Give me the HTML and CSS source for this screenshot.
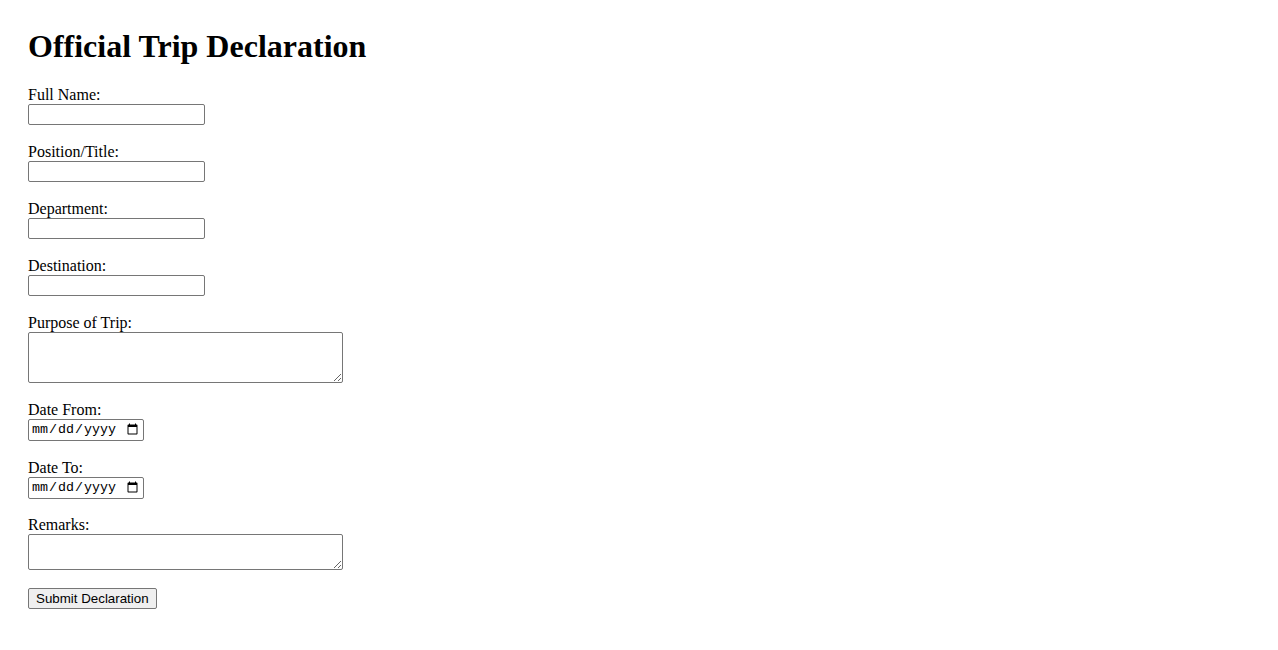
FILE: index.html
```html
<!DOCTYPE html>
<html lang="en">
<head>
<meta charset="utf-8">
<title>Official Trip Declaration</title>
<link rel="stylesheet" href="styles.css">
</head>
<body>
<h1 class="title">Official Trip Declaration</h1>
<form class="form">
  <div class="field">
    <label class="label" for="name">Full Name:</label>
    <input class="text" type="text" id="name">
  </div>
  <div class="field">
    <label class="label" for="pos">Position/Title:</label>
    <input class="text" type="text" id="pos">
  </div>
  <div class="field">
    <label class="label" for="dept">Department:</label>
    <input class="text" type="text" id="dept">
  </div>
  <div class="field">
    <label class="label" for="dest">Destination:</label>
    <input class="text" type="text" id="dest">
  </div>
  <div class="field">
    <label class="label" for="purpose">Purpose of Trip:</label>
    <textarea class="area area-3" id="purpose" rows="3"></textarea>
  </div>
  <div class="field">
    <label class="label" for="from">Date From:</label>
    <input class="date" type="date" id="from">
  </div>
  <div class="field field-date">
    <label class="label" for="to">Date To:</label>
    <input class="date" type="date" id="to">
  </div>
  <div class="field">
    <label class="label" for="remarks">Remarks:</label>
    <textarea class="area area-2" id="remarks" rows="2"></textarea>
  </div>
  <div class="field">
    <button class="submit" type="submit">Submit Declaration</button>
  </div>
</form>
</body>
</html>
```

FILE: styles.css
```css
body {
  margin: 0;
  padding: 28px;
  font-family: "Liberation Serif", "Times New Roman", serif;
  font-size: 16px;
  color: #000;
  background: #fff;
}
.title {
  font-size: 32px;
  font-weight: bold;
  margin: 0 0 21px;
}
.field {
  margin-bottom: 18px;
}
.label {
  display: block;
}
.text {
  width: 177px;
  height: 21px;
  box-sizing: border-box;
  font-family: "Liberation Sans", Arial, sans-serif;
  font-size: 13.33px;
  border: 1px solid #767676;
  border-radius: 2px;
  padding: 1px 2px;
  margin: 0;
  vertical-align: top;
}
.area {
  width: 315px;
  box-sizing: border-box;
  font-family: "Liberation Mono", monospace;
  font-size: 13.33px;
  border: 1px solid #767676;
  border-radius: 2px;
  padding: 2px;
  margin: 0;
  display: block;
}
.area-3 { height: 51px; }
.area-2 { height: 36px; }
.date {
  width: 116px;
  height: 22px;
  box-sizing: border-box;
  font-family: "Liberation Mono", monospace;
  font-size: 13.33px;
  border: 1px solid #767676;
  border-radius: 2px;
  padding: 1px 2px;
  margin: 0;
  vertical-align: top;
}
.field-date {
  margin-bottom: 17px;
}
.submit {
  font-family: "Liberation Sans", Arial, sans-serif;
  font-size: 13.33px;
  height: 21px;
  padding: 1px 7px;
  border: 1px solid #767676;
  border-radius: 2px;
  background: #efefef;
  color: #000;
  margin: 0;
}
```
